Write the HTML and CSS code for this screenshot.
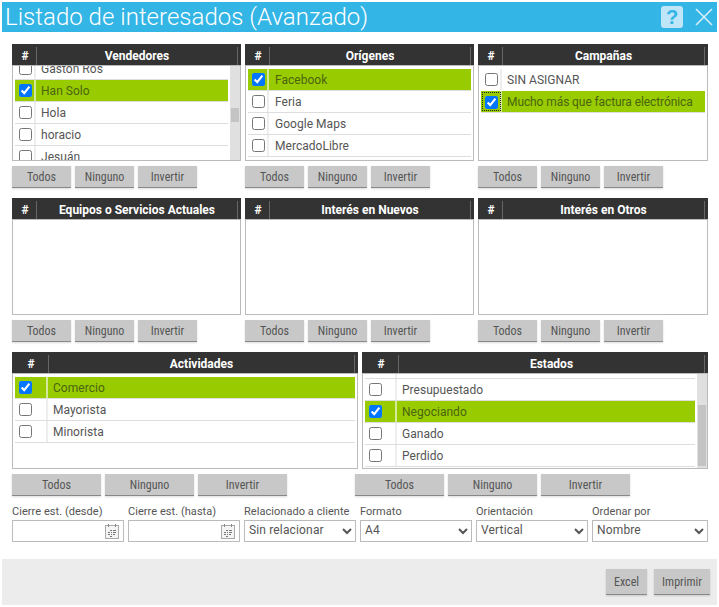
FILE: index.html
```html
<!DOCTYPE html>
<html lang="es">
<head>
<meta charset="utf-8">
<title>Listado de interesados (Avanzado)</title>
<link rel="stylesheet" href="styles.css">
</head>
<body>
<div class="dialog">
  <header class="titlebar">
    <h1 class="title">Listado de interesados (Avanzado)</h1>
    <span class="help">?</span>
    <svg class="close" width="18" height="18" viewBox="0 0 18 18"><path d="M1 1L17 17M17 1L1 17" stroke="#d5eefa" stroke-width="1.6" fill="none"/></svg>
  </header>
  <main class="content">
    <section class="grid-three">
      <div class="group">
        <div class="panel">
          <div class="head"><span class="hash">#</span><span class="name">Vendedores</span></div>
          <div class="body scroll-a">
            <ul class="list">
              <li class="row"><span class="chk"><input type="checkbox"></span><span class="txt">Gastón Ros</span></li>
              <li class="row on"><span class="chk"><input type="checkbox" checked></span><span class="txt">Han Solo</span></li>
              <li class="row"><span class="chk"><input type="checkbox"></span><span class="txt">Hola</span></li>
              <li class="row"><span class="chk"><input type="checkbox"></span><span class="txt">horacio</span></li>
              <li class="row"><span class="chk"><input type="checkbox"></span><span class="txt">Jesuán</span></li>
            </ul>
            <div class="track"><div class="thumb thumb-a"></div></div>
          </div>
        </div>
        <div class="btns"><button class="btn">Todos</button><button class="btn">Ninguno</button><button class="btn">Invertir</button></div>
      </div>
      <div class="group">
        <div class="panel">
          <div class="head"><span class="hash">#</span><span class="name">Orígenes</span></div>
          <div class="body origins">
            <ul class="list">
              <li class="row on"><span class="chk"><input type="checkbox" checked></span><span class="txt">Facebook</span></li>
              <li class="row"><span class="chk"><input type="checkbox"></span><span class="txt">Feria</span></li>
              <li class="row"><span class="chk"><input type="checkbox"></span><span class="txt">Google Maps</span></li>
              <li class="row"><span class="chk"><input type="checkbox"></span><span class="txt">MercadoLibre</span></li>
            </ul>
          </div>
        </div>
        <div class="btns"><button class="btn">Todos</button><button class="btn">Ninguno</button><button class="btn">Invertir</button></div>
      </div>
      <div class="group">
        <div class="panel">
          <div class="head"><span class="hash">#</span><span class="name">Campañas</span></div>
          <div class="body">
            <ul class="list">
              <li class="row plain"><span class="chk"><input type="checkbox"></span><span class="txt">SIN ASIGNAR</span></li>
              <li class="row on"><span class="chk"><span class="focus"><input type="checkbox" checked></span></span><span class="txt long">Mucho más que factura electrónica</span></li>
            </ul>
          </div>
        </div>
        <div class="btns"><button class="btn">Todos</button><button class="btn">Ninguno</button><button class="btn">Invertir</button></div>
      </div>
      <div class="group">
        <div class="panel">
          <div class="head"><span class="hash">#</span><span class="name">Equipos o Servicios Actuales</span></div>
          <div class="body"></div>
        </div>
        <div class="btns"><button class="btn">Todos</button><button class="btn">Ninguno</button><button class="btn">Invertir</button></div>
      </div>
      <div class="group">
        <div class="panel">
          <div class="head"><span class="hash">#</span><span class="name">Interés en Nuevos</span></div>
          <div class="body"></div>
        </div>
        <div class="btns"><button class="btn">Todos</button><button class="btn">Ninguno</button><button class="btn">Invertir</button></div>
      </div>
      <div class="group">
        <div class="panel">
          <div class="head"><span class="hash">#</span><span class="name">Interés en Otros</span></div>
          <div class="body"></div>
        </div>
        <div class="btns"><button class="btn">Todos</button><button class="btn">Ninguno</button><button class="btn">Invertir</button></div>
      </div>
    </section>
    <section class="grid-two">
      <div class="group wide">
        <div class="panel">
          <div class="head"><span class="hash">#</span><span class="name">Actividades</span></div>
          <div class="body">
            <ul class="list">
              <li class="row on"><span class="chk"><input type="checkbox" checked></span><span class="txt">Comercio</span></li>
              <li class="row"><span class="chk"><input type="checkbox"></span><span class="txt">Mayorista</span></li>
              <li class="row"><span class="chk"><input type="checkbox"></span><span class="txt">Minorista</span></li>
            </ul>
          </div>
        </div>
        <div class="btns"><button class="btn">Todos</button><button class="btn">Ninguno</button><button class="btn">Invertir</button></div>
      </div>
      <div class="group wide">
        <div class="panel">
          <div class="head"><span class="hash">#</span><span class="name">Estados</span></div>
          <div class="body scroll-b">
            <ul class="list">
              <li class="row"><span class="chk"><input type="checkbox"></span></li>
              <li class="row"><span class="chk"><input type="checkbox"></span><span class="txt">Presupuestado</span></li>
              <li class="row on"><span class="chk"><input type="checkbox" checked></span><span class="txt">Negociando</span></li>
              <li class="row"><span class="chk"><input type="checkbox"></span><span class="txt">Ganado</span></li>
              <li class="row"><span class="chk"><input type="checkbox"></span><span class="txt">Perdido</span></li>
            </ul>
            <div class="track"><div class="thumb thumb-b"></div></div>
          </div>
        </div>
        <div class="btns btns-shift"><button class="btn">Todos</button><button class="btn">Ninguno</button><button class="btn">Invertir</button></div>
      </div>
    </section>
    <section class="filters">
      <label class="field"><span class="lbl">Cierre est. (desde)</span>
        <span class="date"><input class="inp" type="text">
          <svg class="cal" width="16" height="16" viewBox="0 0 16 16"><rect x="1.5" y="2.5" width="13" height="13" fill="#f4f4f4" stroke="#aaa"/><path d="M4.5 1v3M11.5 1v3" stroke="#888"/><path d="M6 7h2v1H6zM9 7h3v1H9zM4 9h2v1H4zM7 9h1v1H7zM9 9h3v1H9zM4 11h2v1H4zM7 11h1v1H7zM9 11h2v1H9zM6 13h2v1H6z" fill="#777"/></svg>
        </span></label>
      <label class="field"><span class="lbl">Cierre est. (hasta)</span>
        <span class="date"><input class="inp" type="text">
          <svg class="cal" width="16" height="16" viewBox="0 0 16 16"><rect x="1.5" y="2.5" width="13" height="13" fill="#f4f4f4" stroke="#aaa"/><path d="M4.5 1v3M11.5 1v3" stroke="#888"/><path d="M6 7h2v1H6zM9 7h3v1H9zM4 9h2v1H4zM7 9h1v1H7zM9 9h3v1H9zM4 11h2v1H4zM7 11h1v1H7zM9 11h2v1H9zM6 13h2v1H6z" fill="#777"/></svg>
        </span></label>
      <label class="field"><span class="lbl">Relacionado a cliente</span><select class="inp sel"><option>Sin relacionar</option></select></label>
      <label class="field"><span class="lbl">Formato</span><select class="inp sel"><option>A4</option></select></label>
      <label class="field"><span class="lbl">Orientación</span><select class="inp sel"><option>Vertical</option></select></label>
      <label class="field"><span class="lbl">Ordenar por</span><select class="inp sel"><option>Nombre</option></select></label>
    </section>
  </main>
  <footer class="footer">
    <button class="btn foot-btn">Excel</button>
    <button class="btn foot-btn">Imprimir</button>
  </footer>
</div>
</body>
</html>
```
FILE: styles.css
```css
* { box-sizing: border-box; }
html, body { margin: 0; padding: 0; background: #fff; }
body { font-family: Roboto, "Liberation Sans", sans-serif; font-size: 12px; color: #555; }
.dialog { width: 719px; height: 607px; padding: 2px; display: flex; flex-direction: column; overflow: hidden; }
.titlebar { height: 30px; background: #33b5e5; display: flex; align-items: center; padding: 0 4px 0 3px; flex: none; }
.title { flex: 1; margin: 0; font-weight: 300; font-size: 24px; letter-spacing: 0.02px; line-height: 30px; color: #fff; white-space: nowrap; }
.help { width: 22px; height: 22px; border-radius: 3px; background: #bfe6f8; color: #33b5e5; font: bold 20px/22px "Liberation Sans", sans-serif; text-align: center; }
.close { margin-left: 12px; }
.content { flex: 1; padding: 12px 9px 0 10px; }
.grid-three { display: grid; grid-template-columns: 229px 229px 230px; column-gap: 4px; row-gap: 10px; }
.grid-two { display: grid; grid-template-columns: 1fr 1fr; column-gap: 4px; margin-top: 10px; }
.group { min-width: 0; }
.panel { display: flex; flex-direction: column; }
.head { height: 21px; background: #333; color: #fff; display: flex; font-weight: 700; font-size: 12px; padding-top: 3px; padding-right: 3px; }
.hash { width: 25px; flex: none; border-right: 1px solid #666; line-height: 18px; text-align: center; padding-left: 2px; }
.name { flex: 1; border-right: 1px solid #666; line-height: 18px; text-align: center; }
.wide .hash { width: 37px; }
.body { height: 96px; border: 1px solid #bbb; padding: 3px 2px 2px; position: relative; overflow: hidden; background: #fff; }
.list { list-style: none; margin: 0; padding: 0; }
.row { height: 22px; display: flex; border-bottom: 1px solid #ddd; letter-spacing: 0.03px; line-height: 21px; }
.plain { border-bottom-color: #fff; }
.chk { width: 21px; flex: none; border-right: 2px solid #eee; display: flex; align-items: center; padding-left: 4px; }
.wide .chk { width: 33px; }
.wide .scroll-b .chk { width: 32px; }
.chk input { margin: 0; width: 13px; height: 13px; }
.focus { display: block; outline: 1px dotted #222; outline-offset: 2px; height: 13px; }
.txt { padding: 1px 0 0 5px; white-space: nowrap; }
.long { letter-spacing: -0.09px; }
.origins .txt { padding-left: 6px; }
.on { background: #9c0; color: #4a6410; }
.on .chk { border-right-color: #d5e99a; }
.scroll-a { padding-top: 0; padding-right: 12px; }
.scroll-a .list { margin-top: -8px; }
.scroll-b { padding-top: 0; padding-right: 12px; }
.scroll-b .list { margin-top: -17px; }
.track { position: absolute; right: 0; top: 0; bottom: 0; width: 10px; background: #e0e0e0; }
.thumb { position: absolute; left: 1px; right: 1px; background: #c4c4c4; }
.thumb-a { top: 42px; height: 14px; }
.thumb-b { top: 31px; height: 61px; }
.btns { display: flex; gap: 4px; margin-top: 5px; }
.btns-shift { margin-left: -7px; }
.btn { width: 59px; height: 22px; padding: 0; border: 0; border-bottom: 1px solid #888; background: #c8c8c8; color: #555; font-family: Roboto, "Liberation Sans", sans-serif; font-size: 12px; font-stretch: condensed; box-shadow: 0 1px 2px rgba(0,0,0,.15); }
.wide .btn { width: 89px; }
.filters { display: grid; grid-template-columns: repeat(5, 112px) 1fr; column-gap: 4px; margin-top: 9px; }
.field { display: flex; flex-direction: column; min-width: 0; }
.lbl { height: 14px; line-height: 14px; font-size: 11px; letter-spacing: 0.05px; color: #555; white-space: nowrap; margin-bottom: 1px; }
.date { position: relative; display: block; }
.inp { display: block; width: 100%; height: 22px; border: 1px solid #bbb; border-radius: 0; background: #fff; margin: 0; font-family: Roboto, "Liberation Sans", sans-serif; font-size: 12px; letter-spacing: 0.15px; color: #555; }
.sel { padding: 0 0 2px 0; }
.cal { position: absolute; right: 4px; top: 3px; }
.footer { flex: none; height: 46px; background: #ececec; display: flex; justify-content: flex-end; gap: 7px; padding: 10px 7px 0 0; }
.foot-btn { height: 26px; width: 41px; }
.foot-btn:last-child { width: 56px; }
```
